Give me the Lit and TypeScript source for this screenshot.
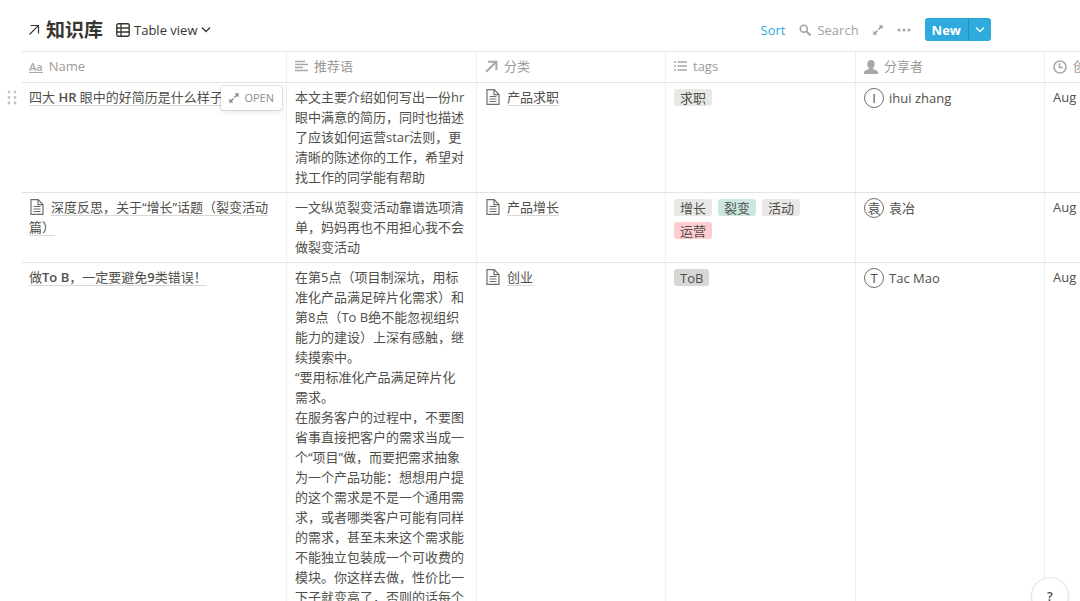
import { LitElement, html, css, svg, TemplateResult } from "lit";
import { customElement } from "lit/decorators.js";
import { classMap } from "lit/directives/class-map.js";

interface Tag {
  label: string;
  tone: "grey" | "green" | "pink" | "dark";
}

interface Entry {
  name: TemplateResult;
  hasPageIcon?: boolean;
  active?: boolean;
  notes: string[];
  category: string;
  tags: Tag[];
  initial: string;
  person: string;
  created: string;
}

const entries: Entry[] = [
  {
    name: html`四大 <b>HR</b> 眼中的好简历是什么样子`,
    active: true,
    notes: [
      "本文主要介绍如何写出一份hr眼中满意的简历，同时也描述了应该如何运营star法则，更清晰的陈述你的工作，希望对找工作的同学能有帮助",
    ],
    category: "产品求职",
    tags: [{ label: "求职", tone: "grey" }],
    initial: "I",
    person: "ihui zhang",
    created: "Aug",
  },
  {
    name: html`深度反思，关于“增长”话题（裂变活动篇）`,
    hasPageIcon: true,
    notes: ["一文纵览裂变活动靠谱选项清单，妈妈再也不用担心我不会做裂变活动"],
    category: "产品增长",
    tags: [
      { label: "增长", tone: "grey" },
      { label: "裂变", tone: "green" },
      { label: "活动", tone: "grey" },
      { label: "运营", tone: "pink" },
    ],
    initial: "袁",
    person: "袁冶",
    created: "Aug",
  },
  {
    name: html`做<b>To B</b>，一定要避免<b>9</b>类错误！`,
    notes: [
      "在第5点（项目制深坑，用标准化产品满足碎片化需求）和第8点（To B绝不能忽视组织能力的建设）上深有感触，继续摸索中。",
      "“要用标准化产品满足碎片化需求。",
      "在服务客户的过程中，不要图省事直接把客户的需求当成一个“项目”做，而要把需求抽象为一个产品功能：想想用户提的这个需求是不是一个通用需求，或者哪类客户可能有同样的需求，甚至未来这个需求能不能独立包装成一个可收费的模块。你这样去做，性价比一下子就变高了，否则的话每个",
    ],
    category: "创业",
    tags: [{ label: "ToB", tone: "dark" }],
    initial: "T",
    person: "Tac Mao",
    created: "Aug",
  },
];

const icon = (size: number, body: TemplateResult) =>
  html`<svg width=${size} height=${size} viewBox="0 0 ${size} ${size}" aria-hidden="true">${body}</svg>`;

const arrowIcon = icon(12, svg`<path d="M1.5 10.5 10.3 1.7M2.6 1.5h7.9v7.9" fill="none" stroke="currentColor" stroke-width="1.2"/>`);
const gridIcon = icon(14, svg`<rect x=".8" y=".8" width="12.4" height="12.4" rx="1.4" fill="none" stroke="currentColor" stroke-width="1.4"/><path d="M.8 5h12.400M.8 9h12.400M5 .8v12.400" fill="none" stroke="currentColor" stroke-width="1.3"/>`);
const chevronIcon = icon(10, svg`<path d="m1 2.500 4 4 4-4" fill="none" stroke="currentColor" stroke-width="1.3"/>`);
const searchIcon = icon(12, svg`<circle cx="4.8" cy="4.8" r="3.500" fill="none" stroke="currentColor" stroke-width="1.6"/><path d="m7.400 7.400 4 4" stroke="currentColor" stroke-width="2"/>`);
const expandIcon = icon(10, svg`<path d="M5.600.3h4.100v4.100L8.200 2.900 6 5.100 4.900 4l2.200-2.200ZM4.400 9.700H.3V5.600l1.500 1.500L4 4.900 5.100 6 2.900 8.200Z" fill="currentColor"/>`);
const dotsIcon = icon(14, svg`<g fill="currentColor"><circle cx="2" cy="7" r="1.5"/><circle cx="7" cy="7" r="1.5"/><circle cx="12" cy="7" r="1.5"/></g>`);
const linesIcon = icon(13, svg`<path d="M0 1.500h10M0 4.500h13M0 7.500h8M0 10.500h13" stroke="currentColor" stroke-width="1.7"/>`);
const relationIcon = icon(13, svg`<path d="M1.200 11.800 11 2M3 1.700h8.400v8.400" fill="none" stroke="currentColor" stroke-width="2"/>`);
const listIcon = icon(13, svg`<path d="M0 2h2M0 6h2M0 10h2M3.500 2H13M3.500 6H13M3.500 10H13" stroke="currentColor" stroke-width="1.6"/>`);
const personIcon = icon(14, svg`<path d="M7 0c2.300 0 3.700 1.500 3.700 3.900 0 1.600-.6 3-1.500 3.900v1.100c2.600.8 4.800 1.700 4.800 3.500V14H0v-1.600c0-1.800 2.200-2.700 4.800-3.500V7.800C3.900 6.900 3.300 5.500 3.300 3.900 3.300 1.500 4.700 0 7 0Z" fill="currentColor"/>`);
const clockIcon = icon(14, svg`<circle cx="7" cy="7" r="6" fill="none" stroke="currentColor" stroke-width="1.6"/><path d="M6.500 3.200v4.300H10" fill="none" stroke="currentColor" stroke-width="1.6"/>`);
const pageIcon = icon(16, svg`<path d="M2 .7h7.200L14 5.500v9.800H2ZM9 .7v5h5M4.500 7.500h7M4.500 10h7M4.500 12.500h7" fill="none" stroke="currentColor" stroke-width="1.2"/>`);

@customElement("app-root")
export class AppRoot extends LitElement {
  static styles = css`
    :host {
      display: block;
      height: 100vh;
      overflow: hidden;
      background: #fff;
      color: #504f4a;
      font: 13px/20px "Open Sans", "Noto Sans CJK SC", sans-serif;
    }
    * {
      box-sizing: border-box;
    }
    svg {
      display: block;
      flex: none;
    }
    button {
      display: flex;
      align-items: center;
      margin: 0;
      padding: 0;
      border: 0;
      background: none;
      color: inherit;
      font: inherit;
      cursor: pointer;
    }
    a {
      color: inherit;
      text-decoration: none;
    }
    b {
      font-weight: 600;
    }
    .toolbar {
      display: flex;
      align-items: center;
      justify-content: space-between;
      height: 51px;
      padding: 8px 89px 0 28px;
    }
    .heading,
    .actions {
      display: flex;
      align-items: center;
    }
    .heading {
      gap: 13px;
    }
    .actions {
      gap: 14px;
      color: #a3a29f;
    }
    .title {
      display: flex;
      align-items: center;
      gap: 6px;
      margin: 0;
      font-size: 19px;
      line-height: 24px;
      font-weight: 700;
      color: #37352f;
    }
    .view {
      gap: 4px;
      font-weight: 500;
      color: #37352f;
    }
    .sort {
      color: #2eaadc;
    }
    .search {
      gap: 6px;
    }
    .split {
      display: flex;
      height: 23px;
      border-radius: 3px;
      overflow: hidden;
      background: #2eaadc;
      color: #fff;
    }
    .new {
      padding: 0 7px;
      font-weight: 700;
    }
    .more {
      padding: 0 6px;
      border-left: 1px solid #2590bd;
    }
    .board {
      padding-left: 22px;
      overflow: hidden;
    }
    table {
      width: 100%;
      table-layout: fixed;
      border-collapse: separate;
      border-spacing: 0;
      border-top: 1px solid #e3e3e1;
    }
    .col-name {
      width: 265px;
    }
    .col-wide {
      width: 190px;
    }
    .col-slim {
      width: 189px;
    }
    th,
    td {
      position: relative;
      padding: 4px 7px 5px 8px;
      border-right: 1px solid #efefed;
      border-bottom: 1px solid #e3e3e1;
      text-align: left;
      vertical-align: top;
      overflow-wrap: anywhere;
    }
    th {
      font-weight: 400;
      color: #9b9a97;
      white-space: nowrap;
    }
    th:last-child,
    td:last-child {
      border-right: 0;
      white-space: nowrap;
    }
    th:first-child,
    td:first-child {
      padding-left: 7px;
    }
    .label {
      display: flex;
      align-items: center;
      gap: 6px;
      line-height: 21px;
    }
    .label svg {
      color: #a9a8a5;
    }
    .aa {
      font-size: 11px;
      line-height: 11px;
      font-weight: 600;
      border-bottom: 1px solid currentColor;
      color: #a9a8a5;
    }
    .page {
      text-decoration: underline 1px #d9d8d6;
      text-underline-offset: 3px;
      text-decoration-skip-ink: none;
    }
    .glyph {
      display: inline-block;
      margin-right: 6px;
      vertical-align: -3px;
      color: #6f6e69;
    }
    p {
      margin: 0;
      padding-right: 4px;
    }
    .handle {
      position: absolute;
      left: -15px;
      top: 7px;
      color: #c4c3c1;
      cursor: grab;
    }
    .open {
      position: absolute;
      right: 4px;
      top: 3px;
      gap: 5px;
      height: 24px;
      padding: 0 8px;
      border-radius: 3px;
      background: #fff;
      box-shadow: 0 0 0 1px rgba(15, 15, 15, 0.1), 0 2px 4px rgba(15, 15, 15, 0.1);
      font-size: 11px;
      font-weight: 500;
      color: #8f8e8b;
    }
    .tags {
      display: flex;
      flex-wrap: wrap;
      gap: 6px;
      padding: 2px 12px 1px 0;
      margin: 0;
      list-style: none;
    }
    .tag {
      height: 17px;
      padding: 0 6px;
      border-radius: 3px;
      line-height: 19px;
      overflow: hidden;
    }
    .grey {
      background: #e8e8e6;
    }
    .green {
      background: #cce7e1;
    }
    .pink {
      background: #ffccd1;
    }
    .dark {
      background: #d7d7d5;
    }
    .person {
      display: flex;
      align-items: center;
      gap: 5px;
      padding-top: 1px;
    }
    .avatar {
      width: 20px;
      height: 20px;
      flex: none;
      border: 1px solid #6f6e69;
      border-radius: 50%;
      line-height: 18px;
      text-align: center;
    }
    .help {
      position: fixed;
      right: 12px;
      bottom: -13px;
      width: 36px;
      height: 36px;
      justify-content: center;
      border-radius: 50%;
      background: #fff;
      box-shadow: 0 0 0 1px rgba(15, 15, 15, 0.1), 0 2px 4px rgba(15, 15, 15, 0.1);
      font-weight: 600;
    }
  `;

  private renderHeader() {
    return html`<thead>
      <tr>
        <th scope="col"><div class="label"><span class="aa">Aa</span>Name</div></th>
        <th scope="col"><div class="label">${linesIcon}推荐语</div></th>
        <th scope="col"><div class="label">${relationIcon}分类</div></th>
        <th scope="col"><div class="label">${listIcon}tags</div></th>
        <th scope="col"><div class="label">${personIcon}分享者</div></th>
        <th scope="col"><div class="label">${clockIcon}创</div></th>
      </tr>
    </thead>`;
  }

  private renderRow(entry: Entry) {
    return html`<tr>
      <td>
        ${entry.active
          ? html`<button class="handle" aria-label="Drag">
              <svg width="10" height="15" viewBox="0 0 10 15" aria-hidden="true">
                <g fill="currentColor">
                  ${[2, 7.5, 13].map(
                    (y) => svg`<circle cx="2" cy=${y} r="1.4"/><circle cx="8" cy=${y} r="1.4"/>`
                  )}
                </g>
              </svg>
            </button>`
          : ""}
        ${entry.hasPageIcon ? html`<span class="glyph">${pageIcon}</span>` : ""}<a class="page" href="#">${entry.name}</a>
        ${entry.active ? html`<button class="open">${expandIcon}OPEN</button>` : ""}
      </td>
      <td>${entry.notes.map((note) => html`<p>${note}</p>`)}</td>
      <td><span class="glyph">${pageIcon}</span><a class="page" href="#">${entry.category}</a></td>
      <td>
        <ul class="tags">
          ${entry.tags.map((tag) => html`<li class=${classMap({ tag: true, [tag.tone]: true })}>${tag.label}</li>`)}
        </ul>
      </td>
      <td>
        <div class="person"><span class="avatar">${entry.initial}</span>${entry.person}</div>
      </td>
      <td>${entry.created}</td>
    </tr>`;
  }

  render() {
    return html`
      <header class="toolbar">
        <div class="heading">
          <h1 class="title">${arrowIcon}<span>知识库</span></h1>
          <button class="view">${gridIcon}<span>Table view</span>${chevronIcon}</button>
        </div>
        <div class="actions">
          <button class="sort">Sort</button>
          <button class="search">${searchIcon}Search</button>
          <button aria-label="Expand">${expandIcon}</button>
          <button aria-label="More">${dotsIcon}</button>
          <div class="split">
            <button class="new">New</button>
            <button class="more" aria-label="New options">${chevronIcon}</button>
          </div>
        </div>
      </header>
      <main class="board">
        <table>
          <colgroup>
            <col class="col-name" />
            <col class="col-wide" />
            <col class="col-slim" />
            <col class="col-wide" />
            <col class="col-slim" />
            <col />
          </colgroup>
          ${this.renderHeader()}
          <tbody>
            ${entries.map((entry) => this.renderRow(entry))}
          </tbody>
        </table>
      </main>
      <button class="help" aria-label="Help">?</button>
    `;
  }
}
